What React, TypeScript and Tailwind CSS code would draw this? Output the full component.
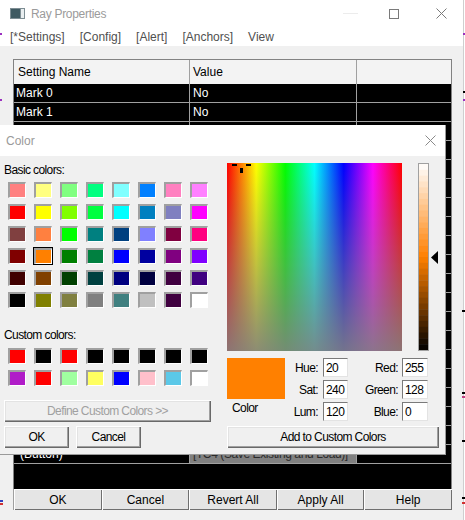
import React from "react";

const basic: string[][] = [
  ["#FF8080", "#FFFF80", "#80FF80", "#00FF80", "#80FFFF", "#0080FF", "#FF80C0", "#FF80FF"],
  ["#FF0000", "#FFFF00", "#80FF00", "#00FF40", "#00FFFF", "#0080C0", "#8080C0", "#FF00FF"],
  ["#804040", "#FF8040", "#00FF00", "#008080", "#004080", "#8080FF", "#800040", "#FF0080"],
  ["#800000", "#FF8000", "#008000", "#008040", "#0000FF", "#0000A0", "#800080", "#8000FF"],
  ["#400000", "#804000", "#004000", "#004040", "#000080", "#000040", "#400040", "#400080"],
  ["#000000", "#808000", "#808040", "#808080", "#408080", "#C0C0C0", "#400040", "#FFFFFF"],
];

const custom: string[][] = [
  ["#FF0000", "#000000", "#FF0000", "#000000", "#000000", "#000000", "#000000", "#000000"],
  ["#B01CC8", "#FF0000", "#A0FFA0", "#FFFF60", "#0000FF", "#FFC0CB", "#5BC8E8", "#FFFFFF"],
];

function Swatch({ c, sel }: { c: string; sel?: boolean }) {
  return (
    <div className="relative w-[18px] h-[16px] border-t-2 border-l-2 border-r border-b border-t-[#a0a0a0] border-l-[#a0a0a0] border-r-white border-b-white">
      <div className="w-full h-full" style={{ backgroundColor: c }} />
      {sel && <div className="absolute left-[-3px] top-[-3px] right-[-2px] bottom-[-2px] border border-black" />}
    </div>
  );
}

const btn3d =
  "flex items-center justify-center bg-[#f0f0f0] shadow-[inset_1px_1px_0_#ffffff,inset_-1px_-1px_0_#696969,inset_-2px_-2px_0_#a0a0a0,inset_2px_2px_0_#e3e3e3]";

function Field({ label, value, lw, gap, iw }: { label: string; value: string; lw: string; gap: string; iw: string }) {
  return (
    <div className="flex items-center h-[19px]">
      <div className={`${lw} text-right`}>{label}</div>
      <div
        className={`${gap} ${iw} h-[19px] bg-white border border-t-[#7a7a7a] border-l-[#7a7a7a] border-r-[#e3e3e3] border-b-[#e3e3e3] pl-[2px] flex items-center`}
      >
        {value}
      </div>
    </div>
  );
}

function LumBar() {
  const n = 32;
  const h = 186 / n;
  return (
    <svg width="9" height="186" className="block">
      {Array.from({ length: n }).map((_, i) => {
        const l = 100 - ((i + 0.5) / n) * 100;
        return <rect key={i} x="0" y={i * h} width="9" height={h + 0.5} fill={`hsl(30,100%,${l}%)`} />;
      })}
    </svg>
  );
}

export default function App() {
  const rows = Array.from({ length: 20 });
  return (
    <div className="relative w-[465px] h-[520px] overflow-hidden bg-white font-['Liberation_Sans',Arial,sans-serif]">
      {/* main window */}
      <div className="w-[464px] h-[520px] border-r border-[#cfcfcf] flex flex-col">
        {/* title bar */}
        <div className="h-[27px] flex items-center bg-white">
          <svg width="15" height="11" className="ml-[10px]" viewBox="0 0 15 11">
            <rect x="0" y="0" width="15" height="11" fill="#7d8d93" />
            <rect x="1" y="1" width="9" height="9" fill="#3f5a62" />
            <rect x="11" y="1" width="3" height="9" fill="#e9eef0" />
          </svg>
          <span className="ml-[6px] text-[12px] text-[#9b9b9b] tracking-[-0.3px]">Ray Properties</span>
          <div className="ml-auto flex items-center">
            <div className="w-[15px] h-px bg-[#ececec]" />
            <svg width="10" height="10" className="ml-[31px]" viewBox="0 0 10 10">
              <rect x="0.5" y="0.5" width="9" height="9" fill="none" stroke="#7a7a7a" strokeWidth="1" />
            </svg>
            <svg width="11" height="11" className="ml-[37px] mr-[16px]" viewBox="0 0 11 11">
              <path d="M0.5 0.5 L10.5 10.5 M10.5 0.5 L0.5 10.5" stroke="#7a7a7a" strokeWidth="1" />
            </svg>
          </div>
        </div>
        {/* menu */}
        <div className="h-[19px] flex items-center pl-[10px] gap-[15px] text-[12px] text-[#505050] bg-white">
          <span>[*Settings]</span>
          <span>[Config]</span>
          <span>[Alert]</span>
          <span>[Anchors]</span>
          <span>View</span>
        </div>
        {/* body */}
        <div className="flex-1 bg-[#f0f0f0] pt-[13px] pl-[13px]">
          <div className="w-[439px] border-l border-r border-t border-[#828282] text-[12px]">
            <div className="h-[24px] flex bg-[#f3f3f3] text-black">
              <div className="w-[176px] border-r border-[#a0a0a0] pl-[4px] flex items-center">Setting Name</div>
              <div className="w-[167px] border-r border-[#a0a0a0] pl-[3px] flex items-center">Value</div>
              <div className="flex-1" />
            </div>
            {rows.map((_, i) => {
              const name = i === 0 ? "Mark 0" : i === 1 ? "Mark 1" : i === 19 ? "(Button)" : "";
              const val = i < 2 ? "No" : i === 19 ? "[TC4 (Save Existing and Load)]" : "";
              const last = i === 19;
              return (
                <div key={i} className="h-[19px] flex bg-black text-white border-b border-[#a0a0a0]">
                  <div
                    className={`w-[176px] border-r border-[#a0a0a0] flex items-center whitespace-nowrap ${last ? "pl-[6px]" : "pl-[2px]"}`}
                  >
                    {name}
                  </div>
                  <div
                    className={`w-[167px] border-r border-[#a0a0a0] pl-[3px] flex items-center whitespace-nowrap ${last ? "bg-[#808080] text-[#2a2a2a] tracking-[-0.4px]" : ""}`}
                  >
                    {val}
                  </div>
                  <div className="flex-1" />
                </div>
              );
            })}
            <div className="h-[25px] bg-black" />
          </div>
          <div className="w-[439px] h-[21px] flex text-[12px] text-black border-l border-[#a0a0a0]">
            {["OK", "Cancel", "Revert All", "Apply All", "Help"].map((t) => (
              <div
                key={t}
                className="flex-1 flex items-center justify-center bg-[#e5e5e5] shadow-[inset_1px_1px_0_#ffffff,inset_-1px_-1px_0_#6f6f6f]"
              >
                {t}
              </div>
            ))}
          </div>
        </div>
      </div>

      {/* edge marks */}
      <div className="absolute left-0 top-[33px] w-[2px] h-[2px] bg-[#9b30c0]" />
      <div className="absolute left-0 top-[99px] w-[2px] h-[2px] bg-[#9b30c0]" />
      <div className="absolute left-[463px] top-[33px] w-[2px] h-[2px] bg-[#9b30c0]" />
      <div className="absolute left-[463px] top-[99px] w-[2px] h-[2px] bg-[#9b30c0]" />
      <div className="absolute left-[463px] top-[91px] w-[2px] h-[2px] bg-black" />
      <div className="absolute left-[462px] top-[310px] w-[3px] h-[2px] bg-black" />
      <div className="absolute left-[462px] top-[392px] w-[3px] h-[2px] bg-black" />
      <div className="absolute left-[462px] top-[396px] w-[3px] h-[2px] bg-[#c04080]" />
      <div className="absolute left-[462px] top-[440px] w-[3px] h-[2px] bg-black" />
      <div className="absolute left-[462px] top-[497px] w-[3px] h-[2px] bg-black" />
      <div className="absolute left-[462px] top-[502px] w-[3px] h-[2px] bg-[#d03030]" />
      <div className="absolute left-0 top-[500px] w-[3px] h-[2px] bg-[#3040c0]" />
      <div className="absolute left-0 top-[503px] w-[3px] h-[2px] bg-[#d03030]" />

      {/* Color dialog */}
      <div className="absolute left-0 top-[125px] w-[446px] h-[330px] bg-[#f0f0f0] border-r border-b border-[#9a9a9a] text-[12px] tracking-[-0.6px] text-black">
        <div className="h-[31px] bg-white flex items-center pl-[6px]">
          <span className="text-[#9a9a9a] tracking-normal">Color</span>
          <svg width="11" height="11" viewBox="0 0 11 11" className="ml-auto mr-[9px]">
            <path d="M0.5 0.5 L10.5 10.5 M10.5 0.5 L0.5 10.5" stroke="#8a8a8a" strokeWidth="1" />
          </svg>
        </div>
        <div className="flex pl-[4px]">
          {/* left column */}
          <div className="w-[207px] flex flex-col pt-[7px]">
            <div className="h-[14px] leading-[14px]">Basic colors:</div>
            <div className="mt-[5px] ml-[4px] grid grid-cols-[repeat(8,18px)] gap-x-[8px] gap-y-[6px]">
              {basic.flatMap((r, ri) => r.map((c, ci) => <Swatch key={`${ri}-${ci}`} c={c} sel={ri === 3 && ci === 1} />))}
            </div>
            <div className="mt-[20px] h-[14px] leading-[14px]">Custom colors:</div>
            <div className="mt-[6px] ml-[4px] grid grid-cols-[repeat(8,18px)] gap-x-[8px] gap-y-[6px]">
              {custom.flatMap((r, ri) => r.map((c, ci) => <Swatch key={`${ri}-${ci}`} c={c} />))}
            </div>
            <div className={`mt-[14px] h-[22px] w-[207px] text-[#a0a0a0] ${btn3d}`}>Define Custom Colors &gt;&gt;</div>
            <div className="mt-[4px] flex gap-[7px]">
              <div className={`w-[65px] h-[22px] ${btn3d}`}>OK</div>
              <div className={`w-[65px] h-[22px] ${btn3d}`}>Cancel</div>
            </div>
          </div>
          {/* right column */}
          <div className="ml-[16px] flex flex-col pt-[7px]">
            <div className="flex items-start">
              <div className="relative w-[175px] h-[188px]">
                <svg width="175" height="188" className="block">
                  <defs>
                    <linearGradient id="hueG" x1="0" x2="1" y1="0" y2="0">
                      <stop offset="0" stopColor="#ff0000" />
                      <stop offset="0.1667" stopColor="#ffff00" />
                      <stop offset="0.3333" stopColor="#00ff00" />
                      <stop offset="0.5" stopColor="#00ffff" />
                      <stop offset="0.6667" stopColor="#0000ff" />
                      <stop offset="0.8333" stopColor="#ff00ff" />
                      <stop offset="1" stopColor="#ff0000" />
                    </linearGradient>
                    <linearGradient id="satG" x1="0" x2="0" y1="0" y2="1">
                      <stop offset="0" stopColor="#808080" stopOpacity="0" />
                      <stop offset="1" stopColor="#808080" stopOpacity="0.9" />
                    </linearGradient>
                  </defs>
                  <rect width="175" height="188" fill="url(#hueG)" />
                  <rect width="175" height="188" fill="url(#satG)" />
                  <rect x="5" y="1" width="5" height="2" fill="#000" />
                  <rect x="19" y="1" width="5" height="2" fill="#000" />
                  <rect x="13" y="5" width="3" height="5" fill="#000" />
                </svg>
              </div>
              <div className="ml-[16px] w-[11px] h-[188px] border border-[#a0a0a0]">
                <LumBar />
              </div>
              <svg width="7" height="13" viewBox="0 0 7 13" className="ml-[2px] mt-[88px]">
                <path d="M0 6.5 L7 0 L7 13 Z" fill="#000" />
              </svg>
            </div>
            <div className="mt-[7px] flex">
              <div className="w-[58px] flex flex-col">
                <div className="h-[41px] bg-[#ff8000]" />
                <div className="mt-[2px] pl-[5px] h-[14px] leading-[14px]">Color</div>
              </div>
              <div className="flex flex-col gap-[3px]">
                <div className="flex">
                  <Field label="Hue:" value="20" lw="w-[33px]" gap="ml-[5px]" iw="w-[25px]" />
                  <Field label="Red:" value="255" lw="w-[50px]" gap="ml-[4px]" iw="w-[26px]" />
                </div>
                <div className="flex">
                  <Field label="Sat:" value="240" lw="w-[33px]" gap="ml-[5px]" iw="w-[25px]" />
                  <Field label="Green:" value="128" lw="w-[50px]" gap="ml-[4px]" iw="w-[26px]" />
                </div>
                <div className="flex">
                  <Field label="Lum:" value="120" lw="w-[33px]" gap="ml-[5px]" iw="w-[25px]" />
                  <Field label="Blue:" value="0" lw="w-[50px]" gap="ml-[4px]" iw="w-[26px]" />
                </div>
              </div>
            </div>
            <div className={`mt-[5px] h-[22px] w-[212px] ${btn3d}`}>Add to Custom Colors</div>
          </div>
        </div>
      </div>
    </div>
  );
}
